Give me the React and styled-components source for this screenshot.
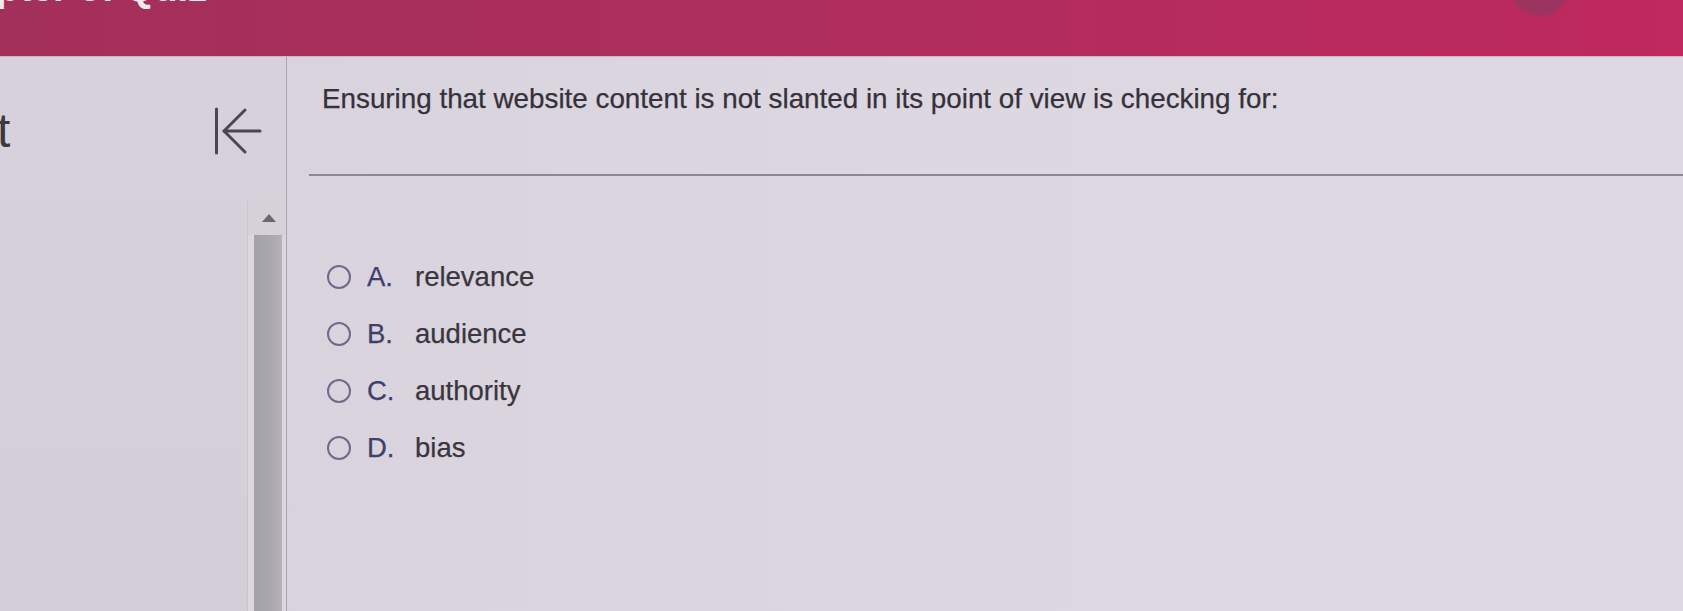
import React from "react";
import styled, { createGlobalStyle } from "styled-components";

const Global = createGlobalStyle`
  html, body { margin: 0; padding: 0; }
  body {
    background: #d9d4de;
    font-family: "Liberation Sans", Arial, sans-serif;
    overflow: hidden;
  }
`;

const Page = styled.div`
  width: 1683px;
  height: 611px;
  display: flex;
  flex-direction: column;
  overflow: hidden;
`;

const Header = styled.header`
  height: 56px;
  flex: none;
  display: flex;
  align-items: flex-start;
  overflow: hidden;
  background: linear-gradient(90deg, #a3305a 0%, #ad2e5b 45%, #bf295d 100%);
  border-bottom: 1px solid #c9b7c4;
`;

const HeaderTitle = styled.h1`
  margin: -31px 0 0 -4px;
  font-size: 38px;
  line-height: 38px;
  font-weight: 700;
  color: #f1e9ee;
  white-space: nowrap;
`;

const Avatar = styled.div`
  margin: -44px 113px 0 auto;
  width: 60px;
  height: 60px;
  border-radius: 50%;
  background: #9c3460;
  filter: blur(1px);
`;

const Body = styled.div`
  flex: 1;
  display: flex;
  min-height: 0;
`;

const Sidebar = styled.aside`
  width: 286px;
  flex: none;
  display: flex;
  flex-direction: column;
  background: linear-gradient(180deg, #d6d1da 0%, #d3ced8 100%);
  border-right: 1px solid #a9a4ae;
`;

const SidebarTop = styled.div`
  height: 143px;
  flex: none;
  display: flex;
  justify-content: space-between;
  align-items: flex-start;
  padding-right: 23px;
`;

const SideTitle = styled.span`
  margin: 50px 0 0 -3px;
  font-size: 48px;
  line-height: 48px;
  color: #3b3940;
`;

const CollapseButton = styled.button`
  margin-top: 50px;
  padding: 0;
  border: 0;
  background: none;
  width: 50px;
  height: 48px;
  display: flex;
  cursor: pointer;
`;

const ScrollTrack = styled.div`
  flex: 1;
  align-self: flex-end;
  width: 38px;
  display: flex;
  flex-direction: column;
  background: #dad7de;
  border-left: 1px solid #cbc7cf;
`;

const ScrollUp = styled.div`
  height: 35px;
  flex: none;
  display: flex;
  align-items: center;
  justify-content: center;
  padding-left: 4px;
  background: #d4d1d8;
  &::after {
    content: "";
    width: 0;
    height: 0;
    border-left: 7px solid transparent;
    border-right: 7px solid transparent;
    border-bottom: 8px solid #6b6970;
  }
`;

const ScrollThumb = styled.div`
  flex: 1;
  margin: 0 4px 0 6px;
  background: linear-gradient(90deg, #a3a1a8 0%, #aaa8ae 60%, #b4b1b8 100%);
`;

const Main = styled.main`
  flex: 1;
  display: flex;
  flex-direction: column;
  background: linear-gradient(90deg, #d8d3dc 0%, #dcd7e0 50%, #ddd8e1 100%);
  color: #3b3741;
`;

const Question = styled.p`
  margin: 26px 0 0 35px;
  font-size: 27.8px;
  line-height: 32px;
  color: #35313b;
  -webkit-text-stroke: 0.25px #35313b;
`;

const Rule = styled.hr`
  margin: 59px 0 0 22px;
  border: 0;
  height: 2px;
  background: #8c8795;
`;

const Options = styled.ul`
  list-style: none;
  margin: 72px 0 0 40px;
  padding: 0;
  display: flex;
  flex-direction: column;
`;

const Option = styled.li`
  height: 57px;
  display: flex;
  align-items: center;
  font-size: 27.5px;
  line-height: 32px;
  -webkit-text-stroke: 0.25px currentColor;
`;

const Radio = styled.span`
  width: 24px;
  height: 24px;
  box-sizing: border-box;
  border: 2.5px solid #6c6b8a;
  border-radius: 50%;
  flex: none;
  margin-right: 16px;
`;

const Letter = styled.span`
  width: 48px;
  flex: none;
  color: #3e3f6c;
`;

const Answer = styled.span`
  color: #3a3640;
`;

const ArrowIcon = () => (
  <svg width="50" height="48" viewBox="0 0 50 48" fill="none" stroke="#4a4752" strokeWidth="3" strokeLinecap="round">
    <line x1="3.5" y1="2" x2="3.5" y2="46" />
    <line x1="11" y1="24" x2="47" y2="24" />
    <polyline points="32,3 11,24 32,45" strokeLinejoin="round" />
  </svg>
);

const options = [
  ["A.", "relevance"],
  ["B.", "audience"],
  ["C.", "authority"],
  ["D.", "bias"],
];

export default function App() {
  return (
    <Page>
      <Global />
      <Header>
        <HeaderTitle>pter of Quiz</HeaderTitle>
        <Avatar />
      </Header>
      <Body>
        <Sidebar>
          <SidebarTop>
            <SideTitle>t</SideTitle>
            <CollapseButton aria-label="Collapse">
              <ArrowIcon />
            </CollapseButton>
          </SidebarTop>
          <ScrollTrack>
            <ScrollUp />
            <ScrollThumb />
          </ScrollTrack>
        </Sidebar>
        <Main>
          <Question>Ensuring that website content is not slanted in its point of view is checking for:</Question>
          <Rule />
          <Options>
            {options.map(([l, t]) => (
              <Option key={l}>
                <Radio />
                <Letter>{l}</Letter>
                <Answer>{t}</Answer>
              </Option>
            ))}
          </Options>
        </Main>
      </Body>
    </Page>
  );
}
